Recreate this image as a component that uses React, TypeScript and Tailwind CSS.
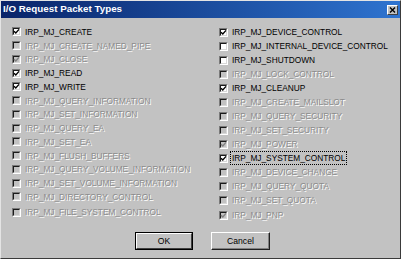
import React from "react";

type Item = {
  name: string;
  checked?: boolean;
  disabled?: boolean;
  focused?: boolean;
};

const leftItems: Item[] = [
  { name: "IRP_MJ_CREATE", checked: true },
  { name: "IRP_MJ_CREATE_NAMED_PIPE", disabled: true },
  { name: "IRP_MJ_CLOSE", checked: true, disabled: true },
  { name: "IRP_MJ_READ", checked: true },
  { name: "IRP_MJ_WRITE", checked: true },
  { name: "IRP_MJ_QUERY_INFORMATION", disabled: true },
  { name: "IRP_MJ_SET_INFORMATION", disabled: true },
  { name: "IRP_MJ_QUERY_EA", disabled: true },
  { name: "IRP_MJ_SET_EA", disabled: true },
  { name: "IRP_MJ_FLUSH_BUFFERS", disabled: true },
  { name: "IRP_MJ_QUERY_VOLUME_INFORMATION", disabled: true },
  { name: "IRP_MJ_SET_VOLUME_INFORMATION", disabled: true },
  { name: "IRP_MJ_DIRECTORY_CONTROL", disabled: true },
];

const rightItems: Item[] = [
  { name: "IRP_MJ_DEVICE_CONTROL", checked: true },
  { name: "IRP_MJ_INTERNAL_DEVICE_CONTROL" },
  { name: "IRP_MJ_SHUTDOWN" },
  { name: "IRP_MJ_LOCK_CONTROL", disabled: true },
  { name: "IRP_MJ_CLEANUP", checked: true },
  { name: "IRP_MJ_CREATE_MAILSLOT", disabled: true },
  { name: "IRP_MJ_QUERY_SECURITY", disabled: true },
  { name: "IRP_MJ_SET_SECURITY", disabled: true },
  { name: "IRP_MJ_POWER", checked: true, disabled: true },
  { name: "IRP_MJ_SYSTEM_CONTROL", checked: true, focused: true },
  { name: "IRP_MJ_DEVICE_CHANGE", disabled: true },
  { name: "IRP_MJ_QUERY_QUOTA", disabled: true },
  { name: "IRP_MJ_SET_QUOTA", disabled: true },
];

const CheckBox: React.FC<{ checked?: boolean; disabled?: boolean }> = ({
  checked,
  disabled,
}) => (
  <span className="flex h-[9px] w-[9px] shrink-0 border border-t-[#7a7a7a] border-l-[#7a7a7a] border-r-white border-b-white">
    <span
      className={
        disabled
          ? "relative flex-1 border border-t-[#1a1a1a] border-l-[#1a1a1a] border-r-[#d8d8d8] border-b-[#d8d8d8] bg-[#c2c2c2]"
          : "relative flex-1 border border-t-[#1a1a1a] border-l-[#1a1a1a] border-r-[#d8d8d8] border-b-[#d8d8d8] bg-white"
      }
    >
      {checked && (
        <svg
          viewBox="0 0 7 7"
          className="absolute left-[-1px] top-[-1px] h-[7px] w-[7px] overflow-visible"
        >
          <path
            d="M1 3.2 L2.8 5 L6 1.4"
            fill="none"
            stroke={disabled ? "#808080" : "#000"}
            strokeWidth="1.4"
          />
        </svg>
      )}
    </span>
  </span>
);

const Row: React.FC<{ item: Item; className?: string }> = ({ item, className }) => (
  <div className={`flex items-center gap-[4px] ${className ?? "h-[13.75px]"}`}>
    <CheckBox checked={item.checked} disabled={item.disabled} />
    <span
      className={
        item.disabled
          ? "leading-[10px] text-[#8c8c8c] [text-shadow:1px_1px_0_#ffffff]"
          : item.focused
          ? "leading-[10px] text-black outline-1 outline-dotted outline-black outline-offset-[1px]"
          : "leading-[10px] text-black"
      }
    >
      {item.name}
    </span>
  </div>
);

export default function App() {
  return (
    <div
      className="h-[261px] w-[404px] bg-white"
      style={{ fontFamily: '"Liberation Sans", Arial, sans-serif' }}
    >
      <div className="flex h-[259px] w-[401px] flex-col border border-t-[#e4e4e4] border-l-[#e4e4e4] border-r-[#3a3a3a] border-b-[#3a3a3a] bg-[#c2c2c2]">
        {/* Title bar */}
        <div className="flex h-[17px] items-center justify-between bg-linear-to-r from-[#0a246a] to-[#2f74d0] pl-[2px] pr-[2px]">
          <span className="text-[9.8px] font-bold text-white">I/O Request Packet Types</span>
          <button className="flex h-[10px] w-[11px] items-center justify-center border border-t-white border-l-white border-r-[#404040] border-b-[#404040] bg-[#c2c2c2]">
            <svg viewBox="0 0 7 6" className="h-[6px] w-[7px]">
              <path d="M1 0.5 L6 5.5 M6 0.5 L1 5.5" stroke="#000" strokeWidth="1.4" />
            </svg>
          </button>
        </div>

        {/* Checkbox columns */}
        <div className="flex pl-[11px] pt-[7px] text-[8.3px]">
          <div className="flex w-[207px] flex-col">
            {leftItems.map((it) => (
              <Row key={it.name} item={it} />
            ))}
            <Row
              item={{ name: "IRP_MJ_FILE_SYSTEM_CONTROL", disabled: true }}
              className="mt-[1.5px] h-[13.75px]"
            />
          </div>
          <div className="flex flex-col">
            {rightItems.map((it) => (
              <Row key={it.name} item={it} className="h-[14px]" />
            ))}
            <Row
              item={{ name: "IRP_MJ_PNP", checked: true, disabled: true }}
              className="mt-[1px] h-[14px]"
            />
          </div>
        </div>

        {/* Buttons */}
        <div className="mt-[10px] flex justify-center gap-[18px] pl-[4px] text-[8.6px]">
          <button className="h-[18px] w-[58px] border border-black bg-[#c2c2c2]">
            <span className="flex h-full w-full items-center justify-center border border-t-white border-l-white border-r-[#404040] border-b-[#404040]">
              OK
            </span>
          </button>
          <button className="flex h-[18px] w-[59px] items-center justify-center border border-t-white border-l-white border-r-[#202020] border-b-[#202020] bg-[#c2c2c2] shadow-[inset_-1px_-1px_0_#808080]">
            Cancel
          </button>
        </div>
      </div>
    </div>
  );
}
